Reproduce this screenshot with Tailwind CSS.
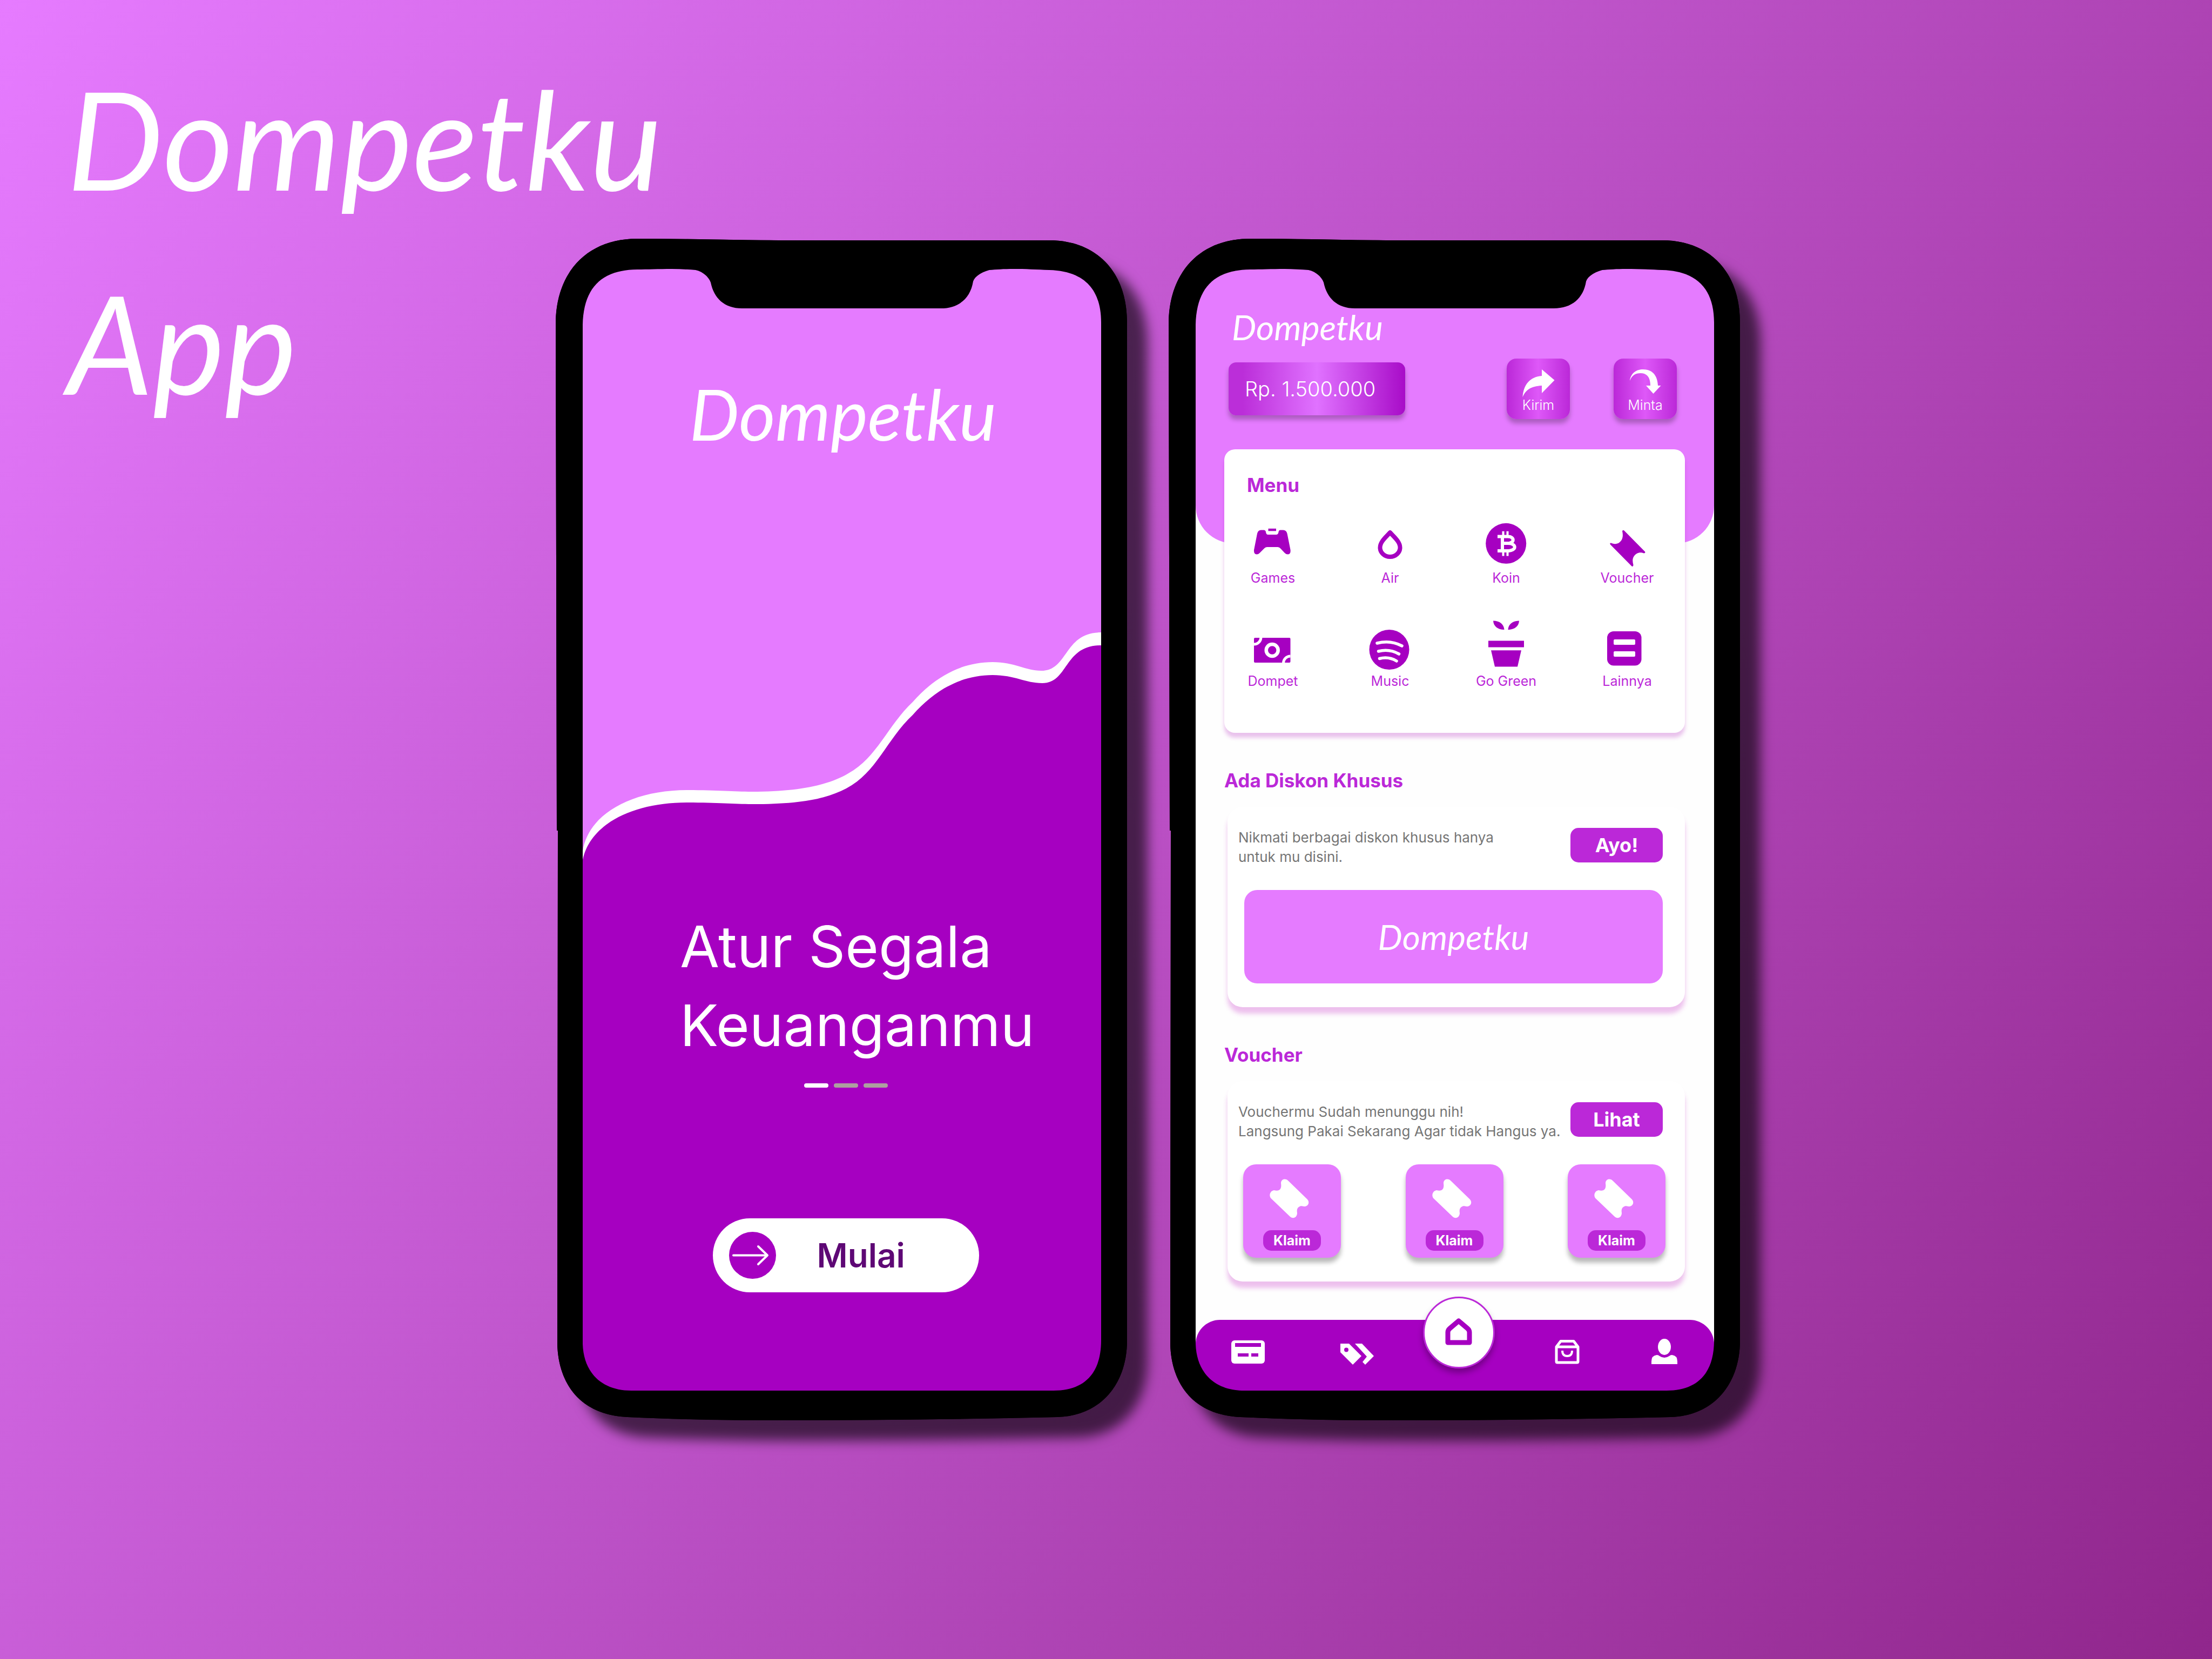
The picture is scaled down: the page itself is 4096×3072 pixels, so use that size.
<!DOCTYPE html>
<html lang="id">
<head>
<meta charset="utf-8">
<meta name="viewport" content="width=device-width, initial-scale=1">
<title>Dompetku App</title>
<script src="https://cdn.jsdelivr.net/npm/@tailwindcss/browser@4"></script>
</head>
<body class="font-['Inter','Open_Sans',sans-serif]">

<!-- Shared drawings -->
<svg class="hidden" aria-hidden="true">
  <symbol id="body" viewBox="0 0 1058 2188">
    <path fill="#000" d="M0 159C0 60 60 0 151 0C250 0 330 3 430 3H914C1000 3 1058 60 1058 155V2040C1058 2120 1010 2180 929 2182C760 2186 580 2188 401 2188C310 2188 220 2186 133 2182C45 2178 5 2120 3 2047L4 1096H2L1 600Z"/>
  </symbol>
  <symbol id="frame" viewBox="0 0 1058 2188">
    <path fill="#000" fill-rule="evenodd" d="M0 159C0 60 60 0 151 0C250 0 330 3 430 3H914C1000 3 1058 60 1058 155V2040C1058 2120 1010 2180 929 2182C760 2186 580 2188 401 2188C310 2188 220 2186 133 2182C45 2178 5 2120 3 2047L4 1096H2L1 600ZM50 159V2047C52 2100 85 2133 140 2133H922C980 2133 1010 2100 1010 2040V155C1010 95 980 60 914 58C890 57 870 56 847 56C830 56 815 57 803 58C788 62 776 70 773 79C768 110 747 129 713 129H345C312 129 293 110 287 81C283 70 272 61 259 58C245 57 230 56 215 56C190 56 170 57 151 57C85 58 52 90 50 159Z"/>
  </symbol>
  <symbol id="ticket" viewBox="0 0 73 73">
    <path fill="currentColor" d="M21 8C21 0 30-2 35 4L70 38C75 44 71 51 64 51C58 50 57 50 54 52C51 54 50 58 51 63C51 71 44 75 38 70L2.500 36C-2 31 1 22 8 21C13 22 16 22 18.500 20C22 17 21.500 12 21 8Z"/>
  </symbol>
</svg>

<main class="grid min-h-screen w-full bg-[linear-gradient(125deg,#e67bff_0%,#90268c_100%)]">

  <h1 class="[grid-area:1/1] self-start justify-self-start pt-[67px] pl-[124px] font-['Lato',sans-serif] text-[252px] leading-[378px] text-white italic">Dompetku<br>App</h1>

  <div class="[grid-area:1/1] flex items-start justify-center gap-[77px] pt-[442px] pb-[442px] pl-[155px]">

    <!-- Welcome screen -->
    <section class="relative h-[2188px] w-[1058px] shrink-0 pt-[54px] pr-[46px] pb-[53px] pl-[48px]">
      <svg class="absolute inset-0 size-full drop-shadow-[38px_38px_11px_rgba(0,0,0,0.62)]" aria-hidden="true"><use href="#body"/></svg>
      <div class="relative flex h-full flex-col items-center overflow-hidden rounded-[80px] bg-[#e57bff] px-[2px] pt-[2px] text-white">
        <svg class="absolute top-[2px] left-[2px] h-[2079px] w-[960px]" viewBox="0 0 960 2079" aria-hidden="true">
          <path fill="#fff" d="M0 1078C10 1010 90 965 194 965C250 965 280 968 313 968C400 968 455 956 492 934C545 905 565 845 611 802C655 752 705 728 759 728C800 728 820 744 849 744C900 744 890 673 960 673V1200H0Z"/>
          <path fill="#a600c1" d="M0 1094C14 1028 92 988 194 988C250 988 280 991 313 991C400 991 450 982 488 962C545 932 562 872 611 826C655 776 705 752 759 752C800 752 820 767 851 767C900 767 890 697 960 697V2079H0Z"/>
        </svg>
        <p class="relative mt-[195px] pl-[4px] font-['Lato',sans-serif] text-[130px] leading-[147px] italic">Dompetku</p>
        <h2 class="relative mt-[840px] ml-[180px] self-start text-[106px] leading-[146px] font-normal">Atur Segala<br>Keuanganmu</h2>
        <div class="relative mt-[34px] ml-[14px] flex gap-[10px]">
          <span class="h-[8px] w-[45px] rounded-sm bg-white"></span>
          <span class="h-[8px] w-[45px] rounded-sm bg-[#ada09f]"></span>
          <span class="h-[8px] w-[45px] rounded-sm bg-[#ada09f]"></span>
        </div>
        <button type="button" class="relative mt-[242px] ml-[14px] flex h-[137px] w-[493px] items-center gap-[76px] rounded-full bg-white pl-[30px] text-[62px] font-semibold text-[#5e0875]">
          <svg class="size-[87px]" viewBox="0 0 87 87" fill="none" aria-hidden="true">
            <circle cx="43.500" cy="43.500" r="43.500" fill="#a600c1"/>
            <path d="M8 43.500H71M54 27L71 43.500L54 60" stroke="#fff" stroke-width="4" stroke-linecap="round" stroke-linejoin="round"/>
          </svg>
          Mulai
        </button>
      </div>
      <svg class="pointer-events-none absolute inset-0 size-full" aria-hidden="true"><use href="#frame"/></svg>
    </section>

    <!-- Home screen -->
    <section class="relative h-[2188px] w-[1058px] shrink-0 pt-[54px] pr-[46px] pb-[53px] pl-[48px]">
      <svg class="absolute inset-0 size-full drop-shadow-[38px_38px_11px_rgba(0,0,0,0.62)]" aria-hidden="true"><use href="#body"/></svg>
      <div class="relative flex h-full flex-col overflow-hidden rounded-[80px] bg-[#fefefe] bg-[linear-gradient(#e57bff_200px,transparent_200px)] px-[2px] pt-[2px]">

        <header class="h-[508px] shrink-0 rounded-b-[70px] bg-[#e57bff] pt-[72px] pr-[69px] pl-[61px] text-white">
          <p class="pl-[6px] font-['Lato',sans-serif] text-[64px] leading-[72px] italic">Dompetku</p>
          <div class="mt-[22px] flex items-center">
            <p class="flex h-[98px] w-[327px] items-center rounded-[14px] bg-[linear-gradient(90deg,#bb2ed9_8%,#e072ff_50%,#a80cc8_100%)] pl-[30px] text-[38px] font-light shadow-[0_8px_8px_rgba(0,0,0,0.25)]">Rp. 1.500.000</p>
            <button type="button" class="ml-auto flex h-[112px] w-[117px] flex-col items-center rounded-[18px] bg-[linear-gradient(90deg,#bb28d8_0%,#de58f8_50%,#bb28d8_100%)] pt-[20px] text-[25px] leading-[28px] font-light shadow-[0_8px_8px_rgba(0,0,0,0.25)]">
              <svg class="h-[52px] w-[60px]" viewBox="0 0 60 52" fill="#fff" aria-hidden="true"><path d="M59.500 20L36 0V12C14 14 2 28 .5 51.500C6 38 16 31 36 30V44Z"/></svg>
              Kirim
            </button>
            <button type="button" class="ml-[81px] flex h-[112px] w-[117px] flex-col items-center rounded-[18px] bg-[linear-gradient(90deg,#bb28d8_0%,#de58f8_50%,#bb28d8_100%)] pt-[20px] text-[25px] leading-[28px] font-light shadow-[0_8px_8px_rgba(0,0,0,0.25)]">
              <svg class="h-[52px] w-[58px]" viewBox="0 0 58 52" fill="#fff" aria-hidden="true"><path d="M0 21C2 6 13 0 24 0C43 0 51 12 52 30H57.500L43.500 45L30 30H38C38 15 32 7 20 7C10 7 4 11 0 21Z"/></svg>
              Minta
            </button>
          </div>
        </header>

        <section class="-mt-[174px] mr-[54px] ml-[53px] shrink-0 rounded-[20px] bg-white pt-[46px] pb-[80px] text-[#bb28d8] shadow-[0_9px_7px_rgba(180,40,190,0.28)]">
          <h2 class="ml-[42px] text-[35px] leading-[40px] font-bold">Menu</h2>
          <ul class="mt-[40px] ml-[33px] grid grid-cols-[217px_215px_224px_114px] gap-y-[63px] text-[25px] leading-[32px]">
            <li><a href="#games" class="flex w-[114px] flex-col items-center whitespace-nowrap">
              <svg class="h-[96px] w-[114px]" viewBox="0 0 114 96" fill="#a600c1" aria-hidden="true"><path d="M35 23.500H40Q43.500 23.500 44 27Q44.500 32 48 32H63Q67 32 67.500 27Q68 23.500 71 23.500H76Q82 23.500 83.500 30L89.500 60Q90.500 68 85 68.500Q81.500 68.500 79 66L71 57.500Q69 55 66 55H46Q43 55 41 57.500L32.500 66Q30 68.500 27 68.500Q21.500 68 22 60.500L28 30Q29.500 23.500 35 23.500Z"/><path d="M48.500 20.800H63V25.300H48.500Z"/></svg>
              Games</a></li>
            <li><a href="#air" class="flex w-[114px] flex-col items-center whitespace-nowrap">
              <svg class="h-[96px] w-[114px]" viewBox="0 0 114 96" fill="none" stroke="#a600c1" stroke-width="8" stroke-linejoin="round" aria-hidden="true"><path d="M57 28C50 36 38.500 45 38.500 56A18.500 17 0 0 0 75.500 56C75.500 45 64 36 57 28Z"/></svg>
              Air</a></li>
            <li><a href="#koin" class="flex w-[114px] flex-col items-center whitespace-nowrap">
              <svg class="h-[96px] w-[114px]" viewBox="0 0 114 96" fill="none" aria-hidden="true"><circle cx="56.700" cy="48.300" r="37.500" fill="#a600c1"/><path d="M41 35.500H60C73 35.500 73 48 60 48H52M60 48C77 48 77 62 60 62H41M50 35.500V62" stroke="#fff" stroke-width="6"/><path d="M51.500 25.700V34M59.500 25.700V34M51.500 63V71.400M59.500 63V71.400" stroke="#fff" stroke-width="4"/></svg>
              Koin</a></li>
            <li><a href="#voucher" class="flex w-[114px] flex-col items-center whitespace-nowrap">
              <svg class="h-[96px] w-[114px]" viewBox="0 0 114 96" fill="#a600c1" aria-hidden="true"><path d="M48 25.500Q49 22.500 52 25L90 63.500Q91.500 66.500 88 66.500C84 65 79 64.500 75 67C67 72 66 79 68.500 88Q68.500 92 65.500 90.500L26 50.500Q24 47 27.500 47.500C33 50 38 49.500 42 47C49 42 50 34 48 25.500Z"/></svg>
              Voucher</a></li>
            <li><a href="#dompet" class="flex w-[114px] flex-col items-center whitespace-nowrap">
              <svg class="h-[96px] w-[114px]" viewBox="0 0 114 96" fill="none" aria-hidden="true"><rect x="22" y="32" width="67.500" height="46" rx="2" fill="#a600c1"/><circle cx="55.700" cy="55" r="11" stroke="#fff" stroke-width="6.500"/><path d="M35 31A13 13 0 0 1 22 44M76.500 79A13 13 0 0 1 89.500 66" stroke="#fff" stroke-width="5"/></svg>
              Dompet</a></li>
            <li><a href="#music" class="flex w-[114px] flex-col items-center whitespace-nowrap">
              <svg class="h-[96px] w-[114px]" viewBox="0 0 114 96" fill="none" aria-hidden="true"><circle cx="55.500" cy="54" r="37" fill="#a600c1"/><path d="M33 42C50 37.500 66 40 79 47M35.500 57C49 53.500 62 55.500 73.500 62M37.500 70.500C49 67.500 59 69 69 75" stroke="#fff" stroke-width="5.500" stroke-linecap="round"/></svg>
              Music</a></li>
            <li><a href="#go-green" class="flex w-[114px] flex-col items-center whitespace-nowrap">
              <svg class="h-[96px] w-[114px]" viewBox="0 0 114 96" fill="#a600c1" aria-hidden="true"><path d="M33 .5C45 .5 53 7 53.500 17C42 17 33.500 11 33 .5ZM81 .5C69 .5 61 7 60.500 17C72 17 80.500 11 81 .5ZM24 37.600H90V49.400H24ZM29 55.300H85L78 85.500H36Z"/></svg>
              Go Green</a></li>
            <li><a href="#lainnya" class="flex w-[114px] flex-col items-center whitespace-nowrap">
              <svg class="h-[96px] w-[114px]" viewBox="0 0 114 96" aria-hidden="true"><rect x="20" y="20" width="63.500" height="63.500" rx="12" fill="#a600c1"/><path d="M34 35H70Q72 35 72 37V43Q72 45 70 45H34Q32 45 32 43V37Q32 35 34 35ZM34 57H70Q72 57 72 59V65Q72 67 70 67H34Q32 67 32 65V59Q32 57 34 57Z" fill="#fff"/></svg>
              Lainnya</a></li>
          </ul>
        </section>

        <h2 class="mt-[68px] ml-[53px] text-[35px] leading-[40px] font-bold text-[#bb28d8]">Ada Diskon Khusus</h2>
        <section class="mt-[29px] mr-[54px] ml-[59px] shrink-0 rounded-[28px] bg-white pt-[39px] pr-[41px] pb-[44px] shadow-[0_12px_8px_rgba(200,50,200,0.3)]">
          <div class="flex items-start justify-between pl-[20px]">
            <p class="text-[26px] leading-[36px] text-[#757575]">Nikmati berbagai diskon khusus hanya<br>untuk mu disini.</p>
            <button type="button" class="h-[64px] w-[171px] rounded-[15px] bg-[#bb28d8] text-[36px] leading-none font-bold text-white">Ayo!</button>
          </div>
          <div class="mt-[43px] ml-[31px] flex h-[173px] items-center justify-center rounded-[24px] bg-[#e57bff] font-['Lato',sans-serif] text-[64px] leading-none text-white italic">Dompetku</div>
        </section>

        <h2 class="mt-[68px] ml-[53px] text-[35px] leading-[40px] font-bold text-[#bb28d8]">Voucher</h2>
        <section class="mt-[29px] mr-[54px] ml-[59px] shrink-0 rounded-[28px] bg-white pt-[39px] pb-[44px] shadow-[0_12px_8px_rgba(200,50,200,0.3)]">
          <div class="flex items-start justify-between pr-[41px] pl-[20px]">
            <p class="text-[26px] leading-[36px] whitespace-nowrap text-[#757575]">Vouchermu Sudah menunggu nih!<br>Langsung Pakai Sekarang Agar tidak Hangus ya.</p>
            <button type="button" class="h-[64px] w-[171px] shrink-0 rounded-[15px] bg-[#bb28d8] text-[36px] leading-none font-bold text-white">Lihat</button>
          </div>
          <div class="mt-[43px] flex justify-between pr-[36px] pl-[29px]">
            <div class="flex h-[173px] w-[181px] flex-col items-center rounded-[24px] bg-[#e57bff] pt-[27px] text-white shadow-[0_9px_8px_rgba(0,0,0,0.28)]">
              <svg class="mr-[10px] size-[73px]" aria-hidden="true"><use href="#ticket"/></svg>
              <button type="button" class="mt-[22px] h-[38px] w-[107px] rounded-[15px] bg-[#bb28d8] text-[25px] leading-none font-bold">Klaim</button>
            </div>
            <div class="flex h-[173px] w-[181px] flex-col items-center rounded-[24px] bg-[#e57bff] pt-[27px] text-white shadow-[0_9px_8px_rgba(0,0,0,0.28)]">
              <svg class="mr-[10px] size-[73px]" aria-hidden="true"><use href="#ticket"/></svg>
              <button type="button" class="mt-[22px] h-[38px] w-[107px] rounded-[15px] bg-[#bb28d8] text-[25px] leading-none font-bold">Klaim</button>
            </div>
            <div class="flex h-[173px] w-[181px] flex-col items-center rounded-[24px] bg-[#e57bff] pt-[27px] text-white shadow-[0_9px_8px_rgba(0,0,0,0.28)]">
              <svg class="mr-[10px] size-[73px]" aria-hidden="true"><use href="#ticket"/></svg>
              <button type="button" class="mt-[22px] h-[38px] w-[107px] rounded-[15px] bg-[#bb28d8] text-[25px] leading-none font-bold">Klaim</button>
            </div>
          </div>
        </section>

        <nav class="mt-[71px] grid h-[134px] shrink-0 grid-cols-[193px_212px_164px_237px_124px] items-center rounded-t-[45px] bg-[#a600c1] pb-[16px]" aria-label="Navigasi utama">
          <a href="#kartu" class="justify-self-center" aria-label="Kartu">
            <svg class="h-[44px] w-[62px]" viewBox="0 0 62 44" aria-hidden="true"><rect width="62" height="43" y="1" rx="6" fill="#fff"/><path fill="#a600c1" d="M7 6H55V13H7ZM12 25H32V31H12ZM37 25H50V31H37Z"/></svg>
          </a>
          <a href="#promo" class="justify-self-center pt-[10px]" aria-label="Promo">
            <svg class="h-[40px] w-[62px]" viewBox="0 0 62 40" fill="#fff" aria-hidden="true"><path fill-rule="evenodd" d="M0 0H16L39 23L23 39L0 16ZM11 7.500A4 4 0 0 0 11 15.500A4 4 0 0 0 11 7.500Z"/><path d="M27 0H40L62 23L46 39L41 34L49 24Z"/></svg>
          </a>
          <a href="#beranda" class="-mt-[72px] flex size-[133px] items-center justify-center justify-self-center rounded-full border-[3px] border-[#bb28d8] bg-white shadow-[0_8px_12px_rgba(0,0,0,0.3)]" aria-label="Beranda">
            <svg class="size-[54px]" viewBox="0 0 54 54" fill="none" stroke="#a600c1" stroke-width="9" stroke-linejoin="round" aria-hidden="true"><path d="M27 6L43.500 20Q47 23 47 27V46H7V27Q7 23 10.500 20Z"/></svg>
          </a>
          <a href="#belanja" class="justify-self-center" aria-label="Belanja">
            <svg class="h-[46px] w-[46px]" viewBox="0 0 46 46" fill="none" stroke="#fff" stroke-width="5" stroke-linejoin="round" aria-hidden="true"><path d="M3 14L11 3.500H35L43 14V41Q43 43 41 43H5Q3 43 3 41ZM3 14H43"/><path d="M14 21Q14 31 23 31Q32 31 32 21" stroke-width="4"/></svg>
          </a>
          <a href="#akun" class="justify-self-center" aria-label="Akun">
            <svg class="h-[48px] w-[48px]" viewBox="0 0 48 48" fill="#fff" aria-hidden="true"><ellipse cx="24" cy="15" rx="12" ry="15"/><path d="M0 47V42Q0 31 10 30Q13 30 15 32Q24 38 33 32Q35 30 38 30Q48 31 48 42V47Z"/></svg>
          </a>
        </nav>
      </div>
      <svg class="pointer-events-none absolute inset-0 size-full" aria-hidden="true"><use href="#frame"/></svg>
    </section>
  </div>
</main>
</body>
</html>
